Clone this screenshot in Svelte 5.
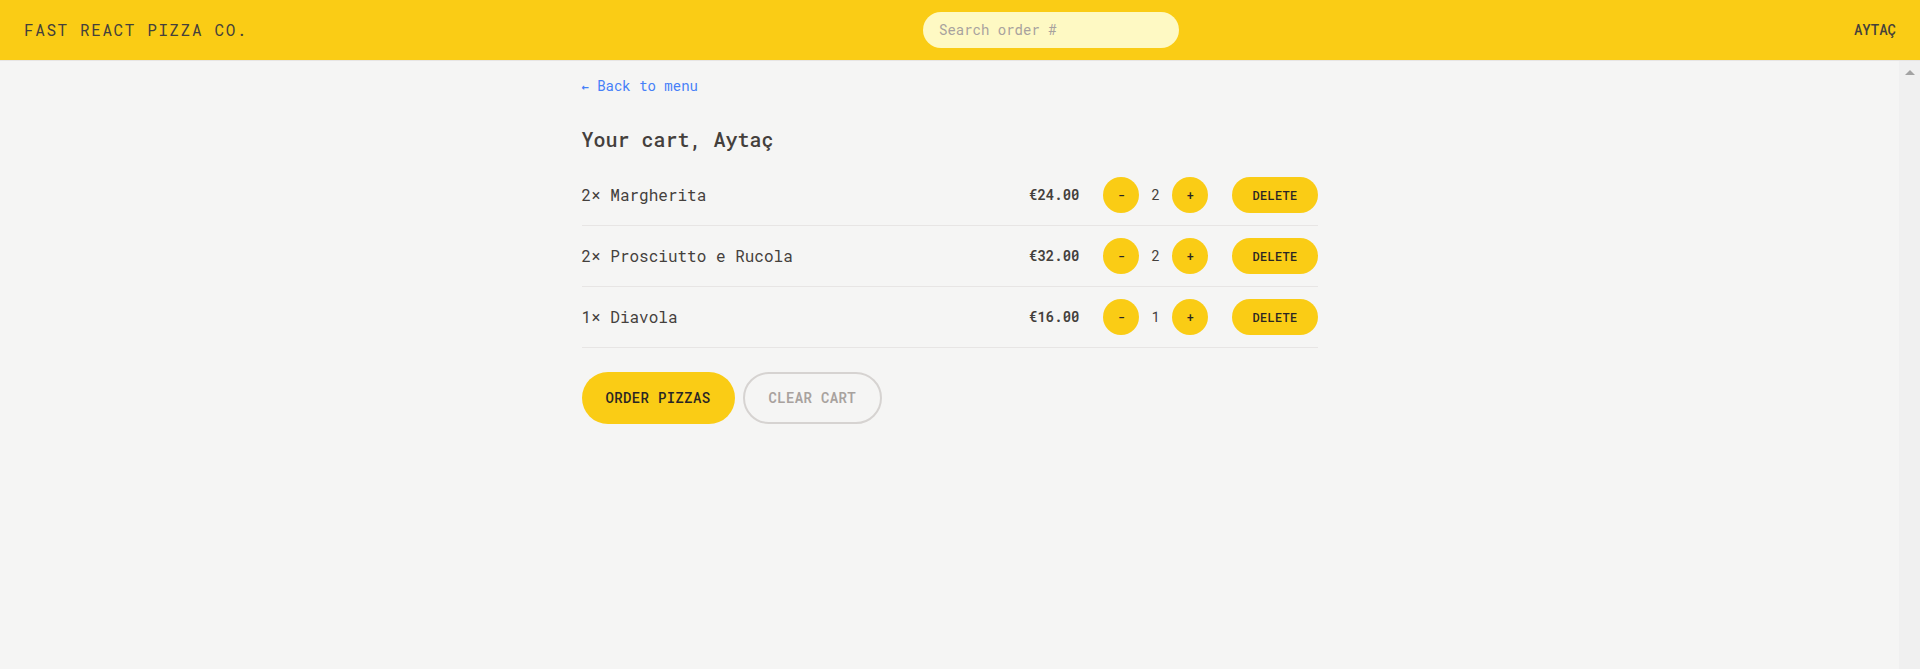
<script lang="ts">
  let username = $state('Aytaç');
  let query = $state('');
  let cart = $state([
    { id: 1, name: 'Margherita', quantity: 2, unitPrice: 12 },
    { id: 2, name: 'Prosciutto e Rucola', quantity: 2, unitPrice: 16 },
    { id: 3, name: 'Diavola', quantity: 1, unitPrice: 16 }
  ]);

  const formatPrice = (value: number) => '€' + value.toFixed(2);

  function remove(id: number) {
    cart = cart.filter((item) => item.id !== id);
  }

  function decrease(item: { id: number; quantity: number }) {
    if (item.quantity === 1) remove(item.id);
    else item.quantity -= 1;
  }
</script>

<div class="app">
  <header>
    <a class="brand" href="#home">Fast React Pizza Co.</a>
    <form onsubmit={(e) => e.preventDefault()}>
      <input type="text" placeholder="Search order #" aria-label="Search order #" bind:value={query} />
    </form>
    <div class="user">{username}</div>
  </header>

  <div class="body">
    <main>
      <div class="back"><a href="#menu"><span class="arrow">&larr;</span> Back to menu</a></div>
      <h2>Your cart, {username}</h2>
      <ul>
        {#each cart as item (item.id)}
          <li>
            <p>{item.quantity}&times; {item.name}</p>
            <div class="controls">
              <p class="price">{formatPrice(item.quantity * item.unitPrice)}</p>
              <div class="quantity">
                <button class="btn round" aria-label="Decrease {item.name}" onclick={() => decrease(item)}>-</button>
                <span>{item.quantity}</span>
                <button class="btn round" aria-label="Increase {item.name}" onclick={() => (item.quantity += 1)}>+</button>
              </div>
              <button class="btn small" onclick={() => remove(item.id)}>Delete</button>
            </div>
          </li>
        {/each}
      </ul>
      <div class="actions">
        <a class="btn primary" href="#order">Order pizzas</a>
        <button class="btn secondary" onclick={() => (cart = [])}>Clear cart</button>
      </div>
    </main>
    <div class="track" aria-hidden="true">
      <svg width="10" height="5" viewBox="0 0 10 5"><path d="M5 0L10 5H0Z" fill="#a3a3a3" /></svg>
    </div>
  </div>
</div>

<style>
  :global(body) {
    margin: 0;
    background: #f5f5f4;
  }

  .app {
    display: flex;
    flex-direction: column;
    min-height: 100vh;
    font-family: 'Roboto Mono', 'Liberation Mono', monospace;
    font-size: 16px;
    line-height: 24px;
    color: #44403c;
  }

  .app * {
    box-sizing: border-box;
  }

  header {
    display: flex;
    align-items: center;
    justify-content: space-between;
    padding: 12px 24px;
    background: #facc15;
    border-bottom: 1px solid #e7e5e4;
    text-transform: uppercase;
  }

  .brand {
    color: inherit;
    text-decoration: none;
    letter-spacing: 0.1em;
  }

  input {
    display: block;
    width: 256px;
    padding: 8px 16px;
    border: 0;
    border-radius: 18px;
    background: #fef9c3;
    color: inherit;
    font-family: inherit;
    font-size: 14px;
    line-height: 20px;
  }

  input::placeholder {
    color: #a8a29e;
    opacity: 1;
  }

  .user {
    font-size: 14px;
    line-height: 20px;
    font-weight: 500;
  }

  .body {
    flex: 1;
    display: grid;
    grid-template-columns: 1fr 21px;
  }

  main {
    width: 100%;
    max-width: 768px;
    margin: 0 auto;
    padding: 12px 16px;
  }

  .track {
    display: flex;
    justify-content: center;
    align-items: flex-start;
    padding-top: 9px;
    background: #f0f0f0;
  }

  .back {
    font-size: 14px;
    line-height: 26px;
  }

  .back a {
    color: #4680f8;
    text-decoration: none;
  }

  .arrow {
    font-family: 'DejaVu Sans Mono', monospace;
    font-size: 12px;
    line-height: 12px;
    font-weight: 700;
  }

  h2 {
    margin: 26px 0 0;
    font-size: 20px;
    line-height: 28px;
    font-weight: 500;
  }

  ul {
    list-style: none;
    margin: 12px 0 0;
    padding: 0;
  }

  li {
    display: flex;
    align-items: center;
    justify-content: space-between;
    padding: 12px 0;
    border-bottom: 1px solid #e7e5e4;
  }

  p {
    margin: 0;
  }

  .controls {
    display: flex;
    align-items: center;
    gap: 24px;
  }

  .quantity {
    display: flex;
    align-items: center;
    gap: 12px;
    font-size: 14px;
    line-height: 20px;
  }

  .quantity span {
    min-width: 9px;
  }

  .price {
    font-size: 14px;
    line-height: 20px;
    font-weight: 600;
  }

  .btn {
    display: inline-block;
    border: 0;
    border-radius: 26px;
    background: #facc15;
    color: #292524;
    font-family: inherit;
    font-size: 14px;
    line-height: 20px;
    font-weight: 500;
    letter-spacing: 0.025em;
    text-transform: uppercase;
    text-decoration: none;
    cursor: pointer;
  }

  .small,
  .round {
    padding: 10px 20px;
    font-size: 12px;
    line-height: 16px;
  }

  .round {
    width: 36px;
    padding: 10px 0;
  }

  .primary {
    padding: 16px 24px;
  }

  .secondary {
    padding: 14px 24px;
    border: 2px solid #d6d3d1;
    background: transparent;
    color: #a8a29e;
    font-weight: 600;
  }

  .actions {
    display: flex;
    gap: 8px;
    margin-top: 24px;
  }
</style>
